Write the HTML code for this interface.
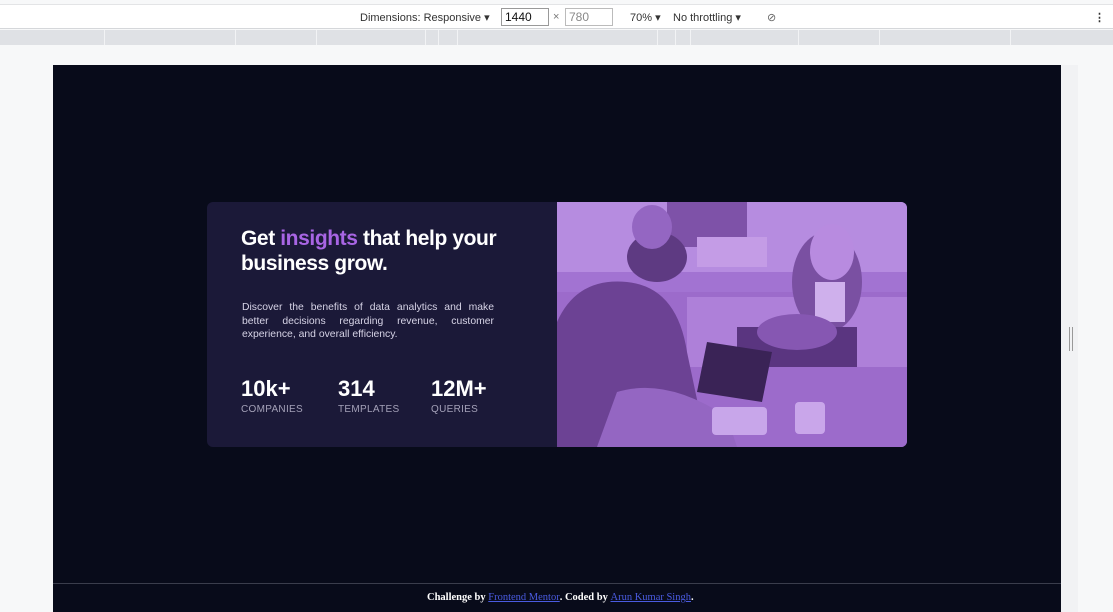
<!DOCTYPE html>
<html><head><meta charset="utf-8"><style>
*{margin:0;padding:0;box-sizing:border-box}
body{width:1113px;height:612px;background:#f7f8f9;font-family:"Liberation Sans",sans-serif;position:relative;overflow:hidden}
.top{position:absolute;left:0;top:4px;width:1113px;height:25px;background:#fff;border-top:1px solid #e3e4e6;border-bottom:1px solid #d5d7da;font-size:11px;color:#333}
.top span{position:absolute;top:6px}
.inp{position:absolute;top:3px;height:18px;width:48px;border:1px solid #999;font-size:12px;padding:1px 3px;background:#fff}
.ruler{position:absolute;left:0;top:30px;width:1113px;height:15px;background:#dfe1e5}
.ruler i{position:absolute;top:0;width:1px;height:15px;background:#f2f3f5}
.vp{position:absolute;left:53px;top:65px;width:1008px;height:547px;background:#080b1a}
.side{position:absolute;left:1061px;top:65px;width:17px;height:547px;background:#f1f2f4}
.card{position:absolute;left:207px;top:202px;width:700px;height:245px;border-radius:6px;background:#1b1938;overflow:hidden}
h1{position:absolute;left:34px;top:24px;font-size:21px;line-height:25px;color:#fff;font-weight:bold;letter-spacing:-0.4px;width:290px}
h1 b{color:#a865e4}
p.d{position:absolute;left:35px;top:99px;width:252px;font-size:10.4px;line-height:13.6px;color:#d6d3e6;text-align:justify}
.st{position:absolute;top:174px;color:#fff;font-weight:bold;font-size:22px}
.lb{position:absolute;top:202px;color:#a4a1b8;font-size:10px;letter-spacing:0.3px}
.ph{position:absolute;left:350px;top:0;width:350px;height:245px}
.foot{position:absolute;left:53px;top:583px;width:1008px;height:29px;border-top:1px solid #3a3d4c;background:#080b1a;font-family:"Liberation Serif",serif;font-size:10.5px;color:#fff;font-weight:bold;padding-top:8px;padding-left:374px}
.foot a{color:#4a5be0;text-decoration:underline;font-weight:normal}
</style></head><body>
<div class="top">
<span style="left:360px">Dimensions: Responsive ▾</span>
<div class="inp" style="left:501px;color:#111">1440</div>
<span style="left:553px;color:#777">×</span>
<div class="inp" style="left:565px;color:#888;border-color:#bbb">780</div>
<span style="left:630px">70% ▾</span>
<span style="left:673px">No throttling ▾</span>
<span style="left:767px;color:#666">⊘</span>
<span style="left:1094px;font-weight:bold">⋮</span>
</div>
<div class="ruler"><i style="left:104px"></i><i style="left:235px"></i><i style="left:316px"></i><i style="left:425px"></i><i style="left:438px"></i><i style="left:457px"></i><i style="left:657px"></i><i style="left:675px"></i><i style="left:690px"></i><i style="left:798px"></i><i style="left:879px"></i><i style="left:1010px"></i></div>
<div class="vp"></div>
<div class="side"><div style="position:absolute;left:8px;top:262px;width:4px;height:24px;border-left:1px solid #999;border-right:1px solid #999"></div></div>
<div class="card">
<h1>Get <b>insights</b> that help your business grow.</h1>
<p class="d">Discover the benefits of data analytics and make better decisions regarding revenue, customer experience, and overall efficiency.</p>
<div class="st" style="left:34px">10k+</div><div class="lb" style="left:34px">COMPANIES</div>
<div class="st" style="left:131px">314</div><div class="lb" style="left:131px">TEMPLATES</div>
<div class="st" style="left:224px">12M+</div><div class="lb" style="left:224px">QUERIES</div>
<svg class="ph" viewBox="0 0 350 245">
<rect width="350" height="245" fill="#a273d2"/>
<rect x="0" y="0" width="350" height="70" fill="#b68ce0"/>
<rect x="110" y="0" width="80" height="45" fill="#7e52a8"/>
<rect x="140" y="35" width="70" height="30" fill="#c49ce6"/>
<rect x="0" y="90" width="350" height="155" fill="#9c6bcb"/>
<rect x="130" y="95" width="220" height="70" fill="#ae80d9"/>
<ellipse cx="100" cy="55" rx="30" ry="25" fill="#5e3a82"/>
<ellipse cx="95" cy="25" rx="20" ry="22" fill="#9466c2"/>
<ellipse cx="270" cy="80" rx="35" ry="50" fill="#7a50a2"/>
<ellipse cx="275" cy="50" rx="22" ry="28" fill="#b88be0"/>
<rect x="258" y="80" width="30" height="40" fill="#cfb0ec"/>
<rect x="180" y="125" width="120" height="40" fill="#5a3580"/>
<path d="M0 245 L0 120 Q20 75 70 80 Q120 85 130 150 L150 245 Z" fill="#6c4294"/>
<path d="M40 245 L60 190 Q110 175 170 215 L180 245Z" fill="#9466c2"/>
<polygon points="150,140 215,150 205,200 140,190" fill="#3a2356"/>
<rect x="155" y="205" width="55" height="28" fill="#c8a6ea" rx="4"/>
<ellipse cx="240" cy="130" rx="40" ry="18" fill="#8657b2"/>
<rect x="238" y="200" width="30" height="32" rx="4" fill="#c9a6ea"/>
</svg>
</div>
<div class="foot">Challenge by <a>Frontend Mentor</a>. Coded by <a>Arun Kumar Singh</a>.</div>
</body></html>
